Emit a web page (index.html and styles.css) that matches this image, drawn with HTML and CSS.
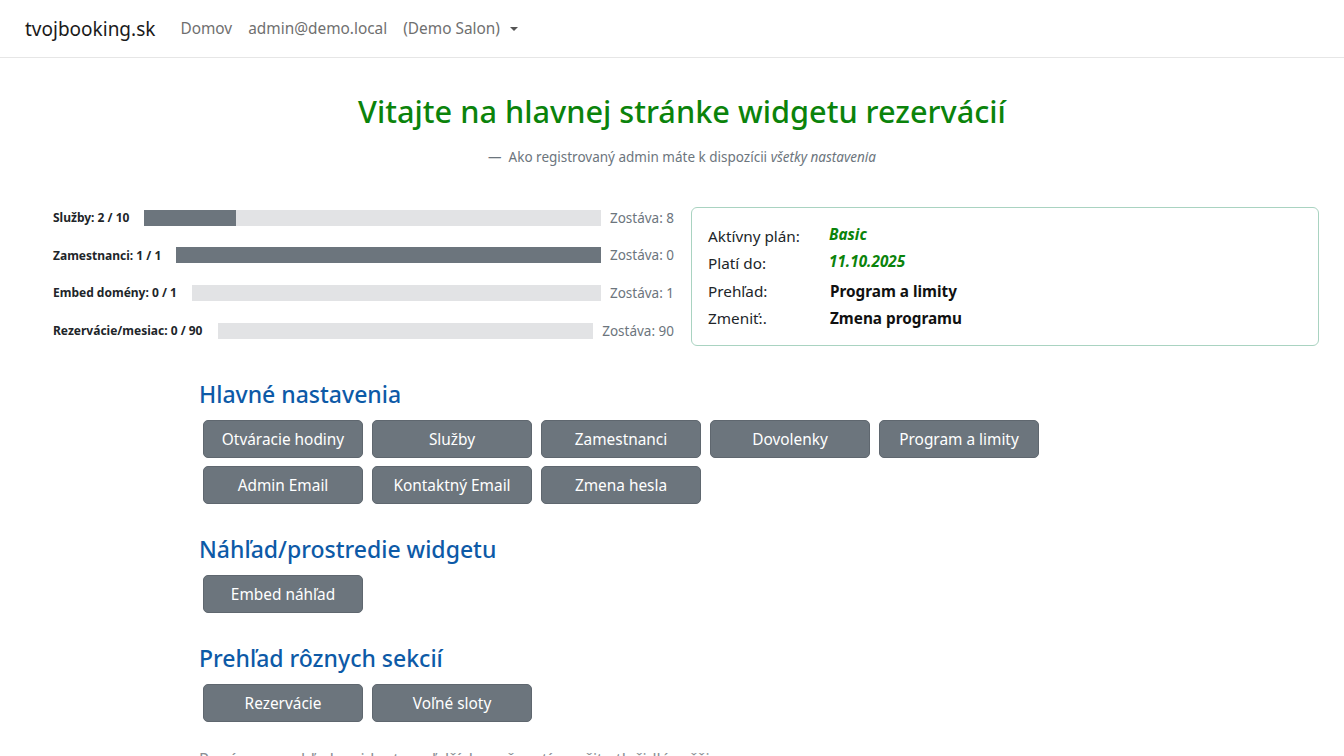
FILE: index.html
```html
<!DOCTYPE html>
<html lang="sk">
<head>
  <meta charset="utf-8">
  <title>tvojbooking.sk</title>
  <link rel="stylesheet" href="styles.css">
</head>
<body>
  <nav class="navbar">
    <a class="brand" href="#">tvojbooking.sk</a>
    <a class="nav-link" href="#">Domov</a>
    <a class="nav-link" href="#">admin@demo.local</a>
    <a class="nav-link dropdown" href="#">(Demo Salon) <span class="caret"></span></a>
  </nav>

  <main class="page">
    <header class="intro">
      <h1>Vitajte na hlavnej stránke widgetu rezervácií</h1>
      <p class="quote-footer">— &nbsp;Ako registrovaný admin máte k dispozícii <em>všetky nastavenia</em></p>
    </header>

    <section class="stats">
      <div class="limits">
        <div class="limit-row">
          <span class="limit-label">Služby: 2 / 10</span>
          <div class="bar"><div class="bar-fill" style="width: 20%"></div></div>
          <span class="limit-left">Zostáva: 8</span>
        </div>
        <div class="limit-row">
          <span class="limit-label">Zamestnanci: 1 / 1</span>
          <div class="bar"><div class="bar-fill" style="width: 100%"></div></div>
          <span class="limit-left">Zostáva: 0</span>
        </div>
        <div class="limit-row">
          <span class="limit-label">Embed domény: 0 / 1</span>
          <div class="bar"><div class="bar-fill" style="width: 0%"></div></div>
          <span class="limit-left">Zostáva: 1</span>
        </div>
        <div class="limit-row">
          <span class="limit-label">Rezervácie/mesiac: 0 / 90</span>
          <div class="bar"><div class="bar-fill" style="width: 0%"></div></div>
          <span class="limit-left">Zostáva: 90</span>
        </div>
      </div>

      <div class="plan-card">
        <div class="plan-row">
          <span class="plan-label">Aktívny plán:</span>
          <span class="plan-value green">Basic</span>
        </div>
        <div class="plan-row">
          <span class="plan-label">Platí do:</span>
          <span class="plan-value green">11.10.2025</span>
        </div>
        <div class="plan-row">
          <span class="plan-label">Prehľad:</span>
          <a class="plan-value link" href="#">Program a limity</a>
        </div>
        <div class="plan-row">
          <span class="plan-label">Zmeniť:.</span>
          <a class="plan-value link" href="#">Zmena programu</a>
        </div>
      </div>
    </section>

    <section class="group">
      <h2>Hlavné nastavenia</h2>
      <div class="btn-grid">
        <button class="btn">Otváracie hodiny</button>
        <button class="btn">Služby</button>
        <button class="btn">Zamestnanci</button>
        <button class="btn">Dovolenky</button>
        <button class="btn">Program a limity</button>
        <button class="btn">Admin Email</button>
        <button class="btn">Kontaktný Email</button>
        <button class="btn">Zmena hesla</button>
      </div>
    </section>

    <section class="group">
      <h2>Náhľad/prostredie widgetu</h2>
      <div class="btn-grid">
        <button class="btn">Embed náhľad</button>
      </div>
    </section>

    <section class="group">
      <h2>Prehľad rôznych sekcií</h2>
      <div class="btn-grid">
        <button class="btn">Rezervácie</button>
        <button class="btn">Voľné sloty</button>
      </div>
    </section>

    <p class="note">Pre úpravu vzhľadu widgetu a ďalších možností použite tlačidlá vyššie.</p>
  </main>
</body>
</html>
```

FILE: styles.css
```css
* { box-sizing: border-box; }

body {
  margin: 0;
  font-family: "Noto Sans", "Open Sans", sans-serif;
  font-size: 16px;
  color: #212529;
  background: #fff;
}

a { text-decoration: none; }

.navbar {
  display: flex;
  align-items: center;
  height: 58px;
  padding: 0 25px;
  border-bottom: 1px solid #e6e6e6;
}
.brand {
  font-size: 19px;
  color: #1a1a1a;
  margin-right: 17px;
}
.nav-link {
  color: #6f6f6f;
  font-size: 15.4px;
  padding: 0 8px;
}
.caret {
  display: inline-block;
  margin-left: 6px;
  vertical-align: 3px;
  border-top: 4px solid #555;
  border-left: 4px solid transparent;
  border-right: 4px solid transparent;
}

.page { padding-left: 20px; }

.intro {
  text-align: center;
  padding-top: 32px;
}
.intro h1 {
  margin: 0;
  font-size: 30.7px;
  font-weight: 500;
  color: #0b830b;
}
.quote-footer {
  margin: 16px 0 0;
  font-size: 13.5px;
  color: #6c757d;
}

.stats {
  display: flex;
  align-items: flex-start;
  gap: 17px;
  margin: 32px 25px 0 33px;
}
.limits {
  width: 621px;
  padding-top: 1px;
}
.limit-row {
  display: flex;
  align-items: center;
  height: 37.6px;
}
.limit-label {
  font-size: 12px;
  font-weight: 700;
  margin-right: 15px;
  white-space: nowrap;
}
.bar {
  flex: 1;
  height: 16px;
  background: #e2e3e5;
}
.bar-fill {
  height: 100%;
  background: #6c757d;
}
.limit-left {
  margin-left: 9px;
  font-size: 13.5px;
  color: #6c757d;
  white-space: nowrap;
}

.plan-card {
  width: 628px;
  height: 139px;
  margin-top: 9px;
  padding: 14px 16px;
  border: 1px solid #a9d3c1;
  border-radius: 6px;
}
.plan-row {
  display: flex;
  align-items: center;
  height: 27.5px;
}
.plan-label {
  width: 121px;
  font-size: 15.3px;
}
.plan-value { font-size: 15.3px; font-weight: 700; }
.plan-value.green {
  color: #0b830b;
  font-style: italic;
  margin-bottom: 4px;
}
.plan-value.link { color: #111; margin-left: 1px; }

.group {
  margin: 0 0 0 179px;
  padding-top: 29px;
}
.group + .group { padding-top: 29px; }
.group h2 {
  margin: 0 0 10px;
  font-size: 23px;
  font-weight: 500;
  color: #0d5aa7;
}
.btn-grid {
  display: grid;
  grid-template-columns: repeat(5, 160px);
  gap: 8px 9px;
  padding-left: 4px;
}
.btn {
  height: 38px;
  border: 1px solid #5f676f;
  border-radius: 5px;
  background: #6c757d;
  color: #fff;
  font-family: inherit;
  font-size: 15.4px;
  cursor: pointer;
}
.btn:hover { background: #5c636a; }

.note {
  margin: 26px 0 0 179px;
  font-size: 16px;
  color: #8a8f94;
}
```
